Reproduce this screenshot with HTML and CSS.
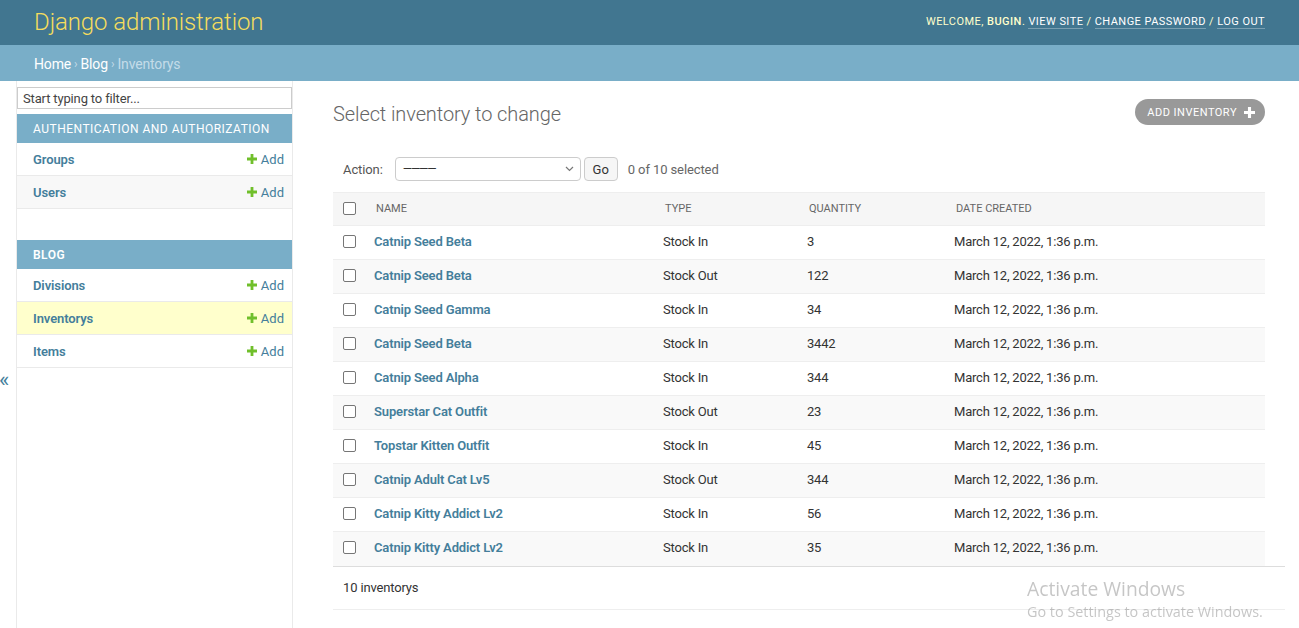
FILE: index.html
```html
<!DOCTYPE html>
<html lang="en">
<head>
<meta charset="utf-8">
<title>Select inventory to change | Django site admin</title>
<link rel="stylesheet" href="styles.css">
</head>
<body>
<div class="header">
  <div class="branding">Django administration</div>
  <div class="user-tools">Welcome, <strong>bugin</strong>. <a href="#">View site</a> / <a href="#">Change password</a> / <a href="#">Log out</a></div>
</div>
<div class="breadcrumbs"><a href="#">Home</a><span class="sep">›</span><a href="#">Blog</a><span class="sep">›</span>Inventorys</div>
<div class="main">
  <div class="toggle"><span>«</span></div>
  <nav class="sidebar">
    <div class="filter"><input class="filter-input" type="text" placeholder="Start typing to filter..."></div>
    <div class="module">
      <div class="caption">Authentication and Authorization</div>
      <div class="mrow"><a class="mname" href="#">Groups</a><a class="addlink" href="#"><svg width="10" height="10" viewBox="0 0 10 10"><path d="M3.6 0h2.8v3.6H10v2.8H6.4V10H3.6V6.4H0V3.6h3.6z" fill="#70bf2b"/></svg>Add</a></div>
      <div class="mrow alt"><a class="mname" href="#">Users</a><a class="addlink" href="#"><svg width="10" height="10" viewBox="0 0 10 10"><path d="M3.6 0h2.8v3.6H10v2.8H6.4V10H3.6V6.4H0V3.6h3.6z" fill="#70bf2b"/></svg>Add</a></div>
    </div>
    <div class="module">
      <div class="caption">Blog</div>
      <div class="mrow"><a class="mname" href="#">Divisions</a><a class="addlink" href="#"><svg width="10" height="10" viewBox="0 0 10 10"><path d="M3.6 0h2.8v3.6H10v2.8H6.4V10H3.6V6.4H0V3.6h3.6z" fill="#70bf2b"/></svg>Add</a></div>
      <div class="mrow current"><a class="mname" href="#">Inventorys</a><a class="addlink" href="#"><svg width="10" height="10" viewBox="0 0 10 10"><path d="M3.6 0h2.8v3.6H10v2.8H6.4V10H3.6V6.4H0V3.6h3.6z" fill="#70bf2b"/></svg>Add</a></div>
      <div class="mrow"><a class="mname" href="#">Items</a><a class="addlink" href="#"><svg width="10" height="10" viewBox="0 0 10 10"><path d="M3.6 0h2.8v3.6H10v2.8H6.4V10H3.6V6.4H0V3.6h3.6z" fill="#70bf2b"/></svg>Add</a></div>
    </div>
  </nav>
  <div class="content">
    <div class="title-row">
      <h1 class="title">Select inventory to change</h1>
      <a class="addbtn" href="#">Add inventory <svg width="11" height="11" viewBox="0 0 10 10"><path d="M3.6 0h2.8v3.6H10v2.8H6.4V10H3.6V6.4H0V3.6h3.6z" fill="#fff"/></svg></a>
    </div>
    <div class="actions">
      <span class="action-label">Action:</span>
      <div class="select"><span class="dashes">————</span><svg class="chev" width="9" height="6" viewBox="0 0 9 6"><path d="M1 1l3.5 3.5L8 1" fill="none" stroke="#777" stroke-width="1.2"/></svg></div>
      <button class="go" type="button">Go</button>
      <span class="counter">0 of 10 selected</span>
    </div>
    <table class="results">
      <colgroup><col class="c1"><col class="c2"><col class="c3"><col class="c4"><col class="c5"></colgroup>
      <thead>
        <tr><th><span class="cb"></span></th><th>Name</th><th>Type</th><th>Quantity</th><th>Date created</th></tr>
      </thead>
      <tbody>
        <tr><td><span class="cb"></span></td><td><a href="#">Catnip Seed Beta</a></td><td>Stock In</td><td>3</td><td>March 12, 2022, 1:36 p.m.</td></tr>
        <tr><td><span class="cb"></span></td><td><a href="#">Catnip Seed Beta</a></td><td>Stock Out</td><td>122</td><td>March 12, 2022, 1:36 p.m.</td></tr>
        <tr><td><span class="cb"></span></td><td><a href="#">Catnip Seed Gamma</a></td><td>Stock In</td><td>34</td><td>March 12, 2022, 1:36 p.m.</td></tr>
        <tr><td><span class="cb"></span></td><td><a href="#">Catnip Seed Beta</a></td><td>Stock In</td><td>3442</td><td>March 12, 2022, 1:36 p.m.</td></tr>
        <tr><td><span class="cb"></span></td><td><a href="#">Catnip Seed Alpha</a></td><td>Stock In</td><td>344</td><td>March 12, 2022, 1:36 p.m.</td></tr>
        <tr><td><span class="cb"></span></td><td><a href="#">Superstar Cat Outfit</a></td><td>Stock Out</td><td>23</td><td>March 12, 2022, 1:36 p.m.</td></tr>
        <tr><td><span class="cb"></span></td><td><a href="#">Topstar Kitten Outfit</a></td><td>Stock In</td><td>45</td><td>March 12, 2022, 1:36 p.m.</td></tr>
        <tr><td><span class="cb"></span></td><td><a href="#">Catnip Adult Cat Lv5</a></td><td>Stock Out</td><td>344</td><td>March 12, 2022, 1:36 p.m.</td></tr>
        <tr><td><span class="cb"></span></td><td><a href="#">Catnip Kitty Addict Lv2</a></td><td>Stock In</td><td>56</td><td>March 12, 2022, 1:36 p.m.</td></tr>
        <tr><td><span class="cb"></span></td><td><a href="#">Catnip Kitty Addict Lv2</a></td><td>Stock In</td><td>35</td><td>March 12, 2022, 1:36 p.m.</td></tr>
      </tbody>
    </table>
    <p class="paginator">10 inventorys</p>
  </div>
</div>
<div class="watermark">
  <div class="wm1">Activate Windows</div>
  <div class="wm2">Go to Settings to activate Windows.</div>
</div>
</body>
</html>
```
FILE: styles.css
```css
* { box-sizing: border-box; }
html, body { margin: 0; padding: 0; }
body {
  font-family: Roboto, "Liberation Sans", sans-serif;
  font-size: 13px;
  color: #333;
  background: #fff;
  overflow: hidden;
}
a { text-decoration: none; color: #447e9b; }

.header {
  height: 45px;
  background: #417690;
  display: flex;
  align-items: center;
  justify-content: space-between;
  padding: 0 34px;
}
.branding {
  font-size: 24px;
  font-weight: 300;
  color: #f5dd5d;
  letter-spacing: -0.1px;
  margin-top: -2px;
}
.user-tools {
  font-size: 11px;
  letter-spacing: 0.45px;
  text-transform: uppercase;
  color: #ffc;
  margin-top: -3px;
}
.user-tools strong { font-weight: 500; }
.user-tools a {
  color: #fff;
  border-bottom: 1px solid rgba(255,255,255,0.3);
}
.breadcrumbs {
  height: 36px;
  background: #79aec8;
  padding: 2px 34px 0;
  display: flex;
  align-items: center;
  font-size: 14px;
  letter-spacing: -0.15px;
  color: #c4dce8;
}
.breadcrumbs a { color: #fff; }
.breadcrumbs .sep { margin: 0 3px; font-size: 12px; }

.main {
  display: flex;
  min-height: 560px;
}
.toggle {
  width: 17px;
  flex: 0 0 17px;
  border-right: 1px solid #eaeaea;
  color: #447e9b;
  font-size: 22px;
  padding-top: 284px;
}
.toggle span { display: block; line-height: 30px; margin-left: -1px; }
.sidebar {
  width: 276px;
  flex: 0 0 276px;
  border-right: 1px solid #eaeaea;
  padding-top: 6px;
}
.filter { padding: 0 0 5px; }
.filter-input {
  display: block;
  width: 275px;
  height: 22px;
  border: 1px solid #ccc;
  font-family: Roboto, sans-serif;
  font-size: 13px;
  letter-spacing: -0.15px;
  padding: 2px 5px;
  color: #333;
}
.filter-input::placeholder { color: #444; }
.module { margin-bottom: 31px; }
.caption {
  height: 29px;
  background: #79aec8;
  color: #fff;
  font-size: 12px;
  letter-spacing: 0.5px;
  text-transform: uppercase;
  padding: 0 16px;
  display: flex;
  align-items: center;
}
.module:nth-child(3) .caption { font-weight: 600; }
.mrow {
  height: 33px;
  border-bottom: 1px solid #eaeaea;
  display: flex;
  align-items: center;
  justify-content: space-between;
  padding: 0 8px 0 16px;
}
.mrow.alt { background: #f8f8f8; }
.mrow.current { background: #ffc; }
.mname { font-weight: 600; font-size: 13px; letter-spacing: -0.1px; }
.addlink {
  display: flex;
  align-items: center;
  gap: 4px;
  font-size: 13px;
}

.content {
  flex: 1;
  padding: 18px 14px 0 40px;
}
.title-row {
  display: flex;
  align-items: center;
  justify-content: space-between;
  margin-right: 20px;
  height: 26px;
}
.title {
  margin: 0;
  font-size: 20px;
  font-weight: 300;
  color: #666;
  letter-spacing: -0.1px;
  position: relative;
  top: 2px;
}
.addbtn {
  display: flex;
  align-items: center;
  gap: 7px;
  height: 26px;
  padding: 0 10px 0 12px;
  border-radius: 15px;
  background: #999;
  color: #fff;
  font-size: 11px;
  letter-spacing: 0.5px;
  text-transform: uppercase;
}
.actions {
  display: flex;
  align-items: center;
  height: 24px;
  margin-top: 32px;
  padding-left: 10px;
  color: #666;
  font-size: 13px;
}
.action-label { margin-right: 12px; color: #555; letter-spacing: -0.1px; }
.select {
  width: 186px;
  height: 24px;
  border: 1px solid #ccc;
  border-radius: 4px;
  display: flex;
  align-items: center;
  justify-content: space-between;
  padding: 0 6px 0 7px;
  background: #fff;
}
.dashes { color: #333; font-size: 12px; letter-spacing: -1.2px; }
.go {
  margin-left: 3px;
  width: 34px;
  height: 24px;
  border: 1px solid #ccc;
  border-radius: 4px;
  background: #f6f6f6;
  font-family: Roboto, sans-serif;
  font-size: 13px;
  color: #333;
  padding: 0;
}
.counter { margin-left: 10px; color: #666; letter-spacing: -0.1px; }

.results {
  margin-top: 11px;
  width: 932px;
  border-collapse: collapse;
  table-layout: fixed;
}
.c1 { width: 33px; }
.c2 { width: 289px; }
.c3 { width: 144px; }
.c4 { width: 147px; }
.c5 { width: 319px; }
.results th, .results td {
  text-align: left;
  vertical-align: middle;
  border-bottom: 1px solid #eee;
  white-space: nowrap;
}
.results thead th {
  background: #f6f6f6;
  border-top: 1px solid #eee;
  height: 33px;
  font-size: 11px;
  font-weight: 400;
  text-transform: uppercase;
  color: #666;
  padding: 0 10px 2px;
}
.results tbody td {
  height: 34px;
  padding: 0 8px 2px;
  font-size: 13px;
  letter-spacing: -0.2px;
  color: #333;
}
.results tbody tr:nth-child(even) td { background: #f9f9f9; }
.results td a { font-weight: 600; letter-spacing: -0.15px; }
.results th:first-child, .results td:first-child { padding: 0 0 0 10px; }
.cb {
  display: block;
  width: 13px;
  height: 13px;
  border: 1px solid #767676;
  border-radius: 2px;
  background: #fff;
  margin-top: -2px;
}
.results tbody tr:last-child td { border-bottom: none; }
.paginator {
  margin: 0;
  height: 44px;
  border-top: 1px solid #ddd;
  border-bottom: 1px solid #eee;
  display: flex;
  align-items: center;
  padding: 0 0 1px 10px;
  font-size: 13px;
  letter-spacing: -0.15px;
  color: #333;
}

.watermark {
  position: fixed;
  left: 1027px;
  top: 576px;
  font-family: "Open Sans", "Noto Sans", sans-serif;
  color: rgba(120,120,120,0.42);
  pointer-events: none;
}
.wm1 { font-size: 19.3px; line-height: 26px; }
.wm2 { font-size: 14.4px; line-height: 19px; }
```
